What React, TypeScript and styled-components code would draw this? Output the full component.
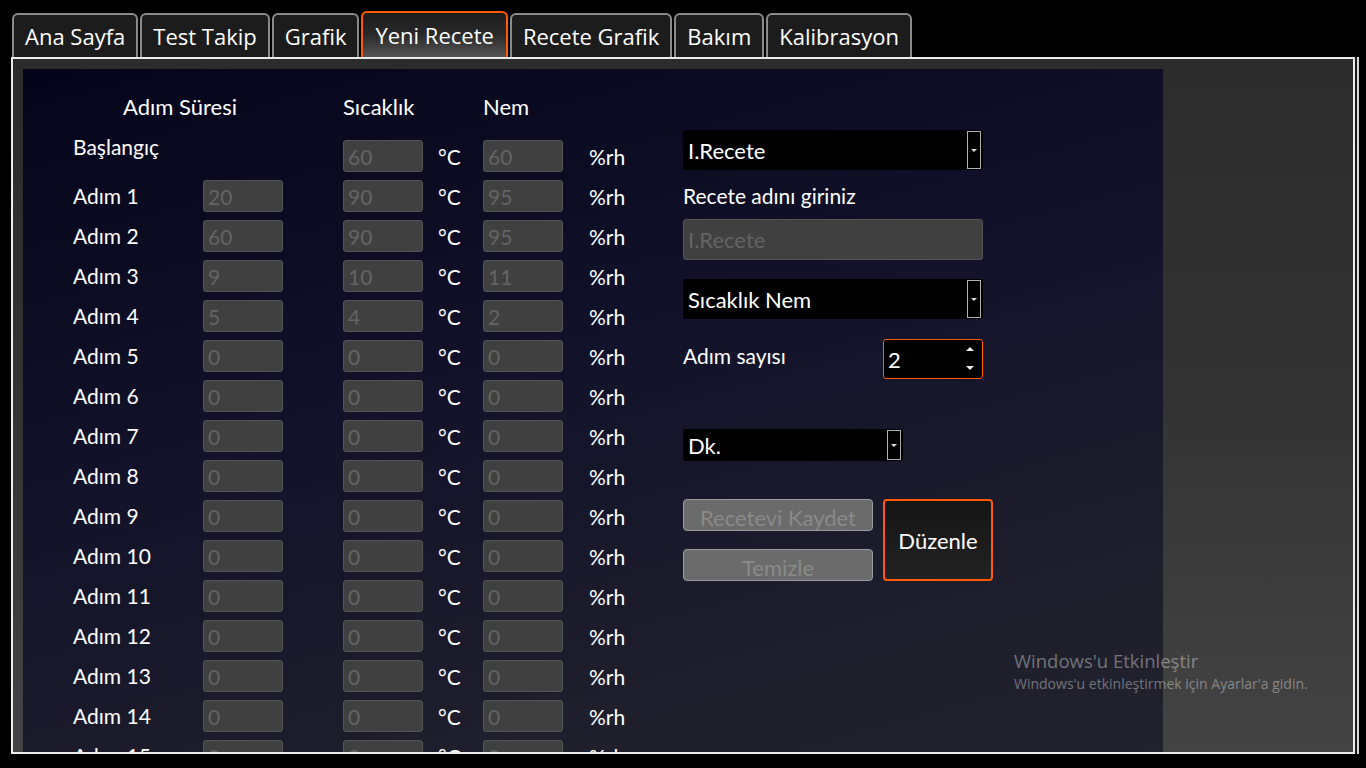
import styled, { createGlobalStyle } from "styled-components";

const GlobalStyle = createGlobalStyle`
  html, body {
    margin: 0;
    padding: 0;
    background: #000;
  }
  * {
    box-sizing: border-box;
  }
`;

const ORANGE = "#ff5a0a";
const LABEL_FONT = `Lato, "Open Sans", sans-serif`;
const TAB_FONT = `"Open Sans", "Noto Sans", sans-serif`;

const Screen = styled.div`
  position: relative;
  width: 1366px;
  height: 768px;
  overflow: hidden;
  background: #000;
`;

const TabBar = styled.div`
  display: flex;
  align-items: flex-end;
  gap: 2px;
  height: 46px;
  margin-top: 11px;
  padding-left: 12px;
`;

const Tab = styled.div<{ active?: boolean }>`
  height: ${(p) => (p.active ? 46 : 44)}px;
  padding: 0 ${(p) => (p.active ? 12 : 11)}px;
  display: flex;
  align-items: center;
  border: 2px solid ${(p) => (p.active ? ORANGE : "#8a8a8a")};
  border-bottom: none;
  border-radius: 6px 6px 0 0;
  background: ${(p) =>
    p.active
      ? "linear-gradient(to bottom, #1c1c1c 0%, #2a2a2a 50%, #555 100%)"
      : "#1c1c1c"};
  color: #fff;
  font-family: ${TAB_FONT};
  font-size: 22px;
  white-space: nowrap;
`;

const Frame = styled.div`
  width: 1344px;
  height: 697px;
  margin-left: 11px;
  padding: 10px 0 0 10px;
  border: 2px solid #ececec;
  box-shadow: 2px 0 0 #1a1a1a, 4px 0 0 #d8d8d8;
  overflow: hidden;
  background: linear-gradient(to bottom, #2c2c2c 0%, #333 50%, #444 100%);
`;

const Panel = styled.div`
  display: flex;
  align-items: flex-start;
  width: 1140px;
  min-height: 960px;
  padding: 24px 0 0 50px;
  background: linear-gradient(165deg, #04041a 0%, #12122a 35%, #1f1f2c 65%, #282830 100%);
  color: #fff;
  font-family: ${LABEL_FONT};
  font-size: 21px;
`;

const StepTable = styled.div`
  width: 610px;
  flex-shrink: 0;
`;

const columns = "130px 80px 60px 80px 60px 80px 120px";

const HeadRow = styled.div`
  display: grid;
  grid-template-columns: ${columns};
  height: 26px;
  margin-bottom: 17px;
  align-items: center;
  font-size: 22px;
`;

const HeadCell = styled.div<{ col: string; indent?: number }>`
  grid-column: ${(p) => p.col};
  padding-left: ${(p) => p.indent ?? 0}px;
  white-space: nowrap;
`;

const StepRow = styled.div`
  display: grid;
  grid-template-columns: ${columns};
  height: 40px;
  align-items: center;
`;

const StepLabel = styled.div<{ top?: boolean }>`
  align-self: ${(p) => (p.top ? "start" : "center")};
  line-height: 22px;
  white-space: nowrap;
`;

const Field = styled.input`
  width: 80px;
  height: 32px;
  padding: 0 4px;
  border: 1px solid #555;
  border-radius: 3px;
  background: #404040;
  color: #646464;
  font-family: ${LABEL_FONT};
  font-size: 21px;
  outline: none;
`;

const Unit = styled.div<{ indent: number }>`
  padding-left: ${(p) => p.indent}px;
  white-space: nowrap;
`;

const SideForm = styled.div`
  width: 310px;
  padding-top: 37px;
  display: flex;
  flex-direction: column;
  align-items: flex-start;
`;

const Select = styled.div<{ w: number; h: number; gapTop?: number }>`
  position: relative;
  width: ${(p) => p.w}px;
  height: ${(p) => p.h}px;
  margin-top: ${(p) => p.gapTop ?? 0}px;
  padding-left: 5px;
  display: flex;
  align-items: center;
  background: #000;
  border-radius: 3px;
  font-size: 22px;
`;

const SelectButton = styled.div`
  position: absolute;
  right: 2px;
  top: 1px;
  bottom: 1px;
  width: 14px;
  border: 1px solid #b0b0b0;
  background: #000;
  display: flex;
  align-items: center;
  justify-content: center;
  &::after {
    content: "";
    border-left: 3px solid transparent;
    border-right: 3px solid transparent;
    border-top: 3px solid #ddd;
  }
`;

const FormLabel = styled.div<{ gapTop?: number; padTop?: number }>`
  margin-top: ${(p) => p.gapTop ?? 0}px;
  padding-top: ${(p) => p.padTop ?? 0}px;
  line-height: 24px;
  white-space: nowrap;
`;

const NameField = styled.input`
  width: 300px;
  height: 41px;
  margin-top: 11px;
  padding: 0 4px;
  border: 1px solid #555;
  border-radius: 3px;
  background: #404040;
  color: #646464;
  font-family: ${LABEL_FONT};
  font-size: 22px;
  outline: none;
  &::placeholder {
    color: #646464;
  }
`;

const SpinRow = styled.div`
  display: flex;
  align-items: flex-start;
  width: 300px;
  height: 40px;
  margin-top: 20px;
  justify-content: space-between;
`;

const Spinner = styled.div`
  position: relative;
  width: 100px;
  height: 40px;
  padding-left: 4px;
  display: flex;
  align-items: center;
  border: 1px solid ${ORANGE};
  border-radius: 3px;
  background: #000;
  font-size: 22px;
`;

const SpinArrows = styled.div`
  position: absolute;
  right: 8px;
  top: 7px;
  bottom: 8px;
  display: flex;
  flex-direction: column;
  justify-content: space-between;
  align-items: center;
`;

const Arrow = styled.span<{ up?: boolean }>`
  width: 0;
  height: 0;
  border-left: 4px solid transparent;
  border-right: 4px solid transparent;
  ${(p) => (p.up ? "border-bottom: 4px solid #eee;" : "border-top: 4px solid #eee;")}
`;

const ButtonGrid = styled.div`
  display: grid;
  grid-template-columns: 190px 110px;
  grid-template-rows: 32px 32px;
  column-gap: 10px;
  row-gap: 18px;
  margin-top: 38px;
`;

const GhostButton = styled.div`
  display: flex;
  align-items: center;
  justify-content: center;
  overflow: hidden;
  border: 1px solid #9c9c9c;
  border-radius: 4px;
  background: #6b6b6b;
  color: #8a8a8a;
  font-size: 22px;
  white-space: nowrap;
  padding-top: 4px;
`;

const EditButton = styled.div`
  grid-column: 2;
  grid-row: 1 / span 2;
  display: flex;
  align-items: center;
  justify-content: center;
  border: 2px solid ${ORANGE};
  border-radius: 4px;
  background: linear-gradient(to bottom, #151515, #222);
  font-size: 22px;
`;

const Watermark = styled.div`
  position: absolute;
  left: 1014px;
  top: 649px;
  font-family: ${TAB_FONT};
  color: rgba(255, 255, 255, 0.38);
  pointer-events: none;
`;

const WatermarkTitle = styled.div`
  font-size: 18.5px;
  line-height: 24px;
`;

const WatermarkText = styled.div`
  font-size: 14px;
  line-height: 21px;
`;

const tabs = ["Ana Sayfa", "Test Takip", "Grafik", "Yeni Recete", "Recete Grafik", "Bakım", "Kalibrasyon"];

const steps: [string, string, string][] = [
  ["20", "90", "95"],
  ["60", "90", "95"],
  ["9", "10", "11"],
  ["5", "4", "2"],
  ...Array.from({ length: 16 }, () => ["0", "0", "0"] as [string, string, string]),
];

export default function App() {
  return (
    <Screen>
      <GlobalStyle />
      <TabBar>
        {tabs.map((t) => (
          <Tab key={t} active={t === "Yeni Recete"}>
            {t}
          </Tab>
        ))}
      </TabBar>
      <Frame>
        <Panel>
          <StepTable>
            <HeadRow>
              <HeadCell col="1 / span 2" indent={50}>Adım Süresi</HeadCell>
              <HeadCell col="4">Sıcaklık</HeadCell>
              <HeadCell col="6">Nem</HeadCell>
            </HeadRow>
            <StepRow>
              <StepLabel top>Başlangıç</StepLabel>
              <span />
              <span />
              <Field readOnly value="60" />
              <Unit indent={15}>°C</Unit>
              <Field readOnly value="60" />
              <Unit indent={26}>%rh</Unit>
            </StepRow>
            {steps.map((s, i) => (
              <StepRow key={i}>
                <StepLabel>Adım {i + 1}</StepLabel>
                <Field readOnly value={s[0]} />
                <span />
                <Field readOnly value={s[1]} />
                <Unit indent={15}>°C</Unit>
                <Field readOnly value={s[2]} />
                <Unit indent={26}>%rh</Unit>
              </StepRow>
            ))}
          </StepTable>
          <SideForm>
            <Select w={300} h={40}>
              I.Recete
              <SelectButton />
            </Select>
            <FormLabel gapTop={14}>Recete adını giriniz</FormLabel>
            <NameField readOnly placeholder="I.Recete" />
            <Select w={300} h={40} gapTop={19}>
              Sıcaklık Nem
              <SelectButton />
            </Select>
            <SpinRow>
              <FormLabel padTop={5}>Adım sayısı</FormLabel>
              <Spinner>
                2
                <SpinArrows>
                  <Arrow up />
                  <Arrow />
                </SpinArrows>
              </Spinner>
            </SpinRow>
            <Select w={220} h={32} gapTop={50}>
              Dk.
              <SelectButton />
            </Select>
            <ButtonGrid>
              <GhostButton>Recetevi Kaydet</GhostButton>
              <EditButton>Düzenle</EditButton>
              <GhostButton>Temizle</GhostButton>
            </ButtonGrid>
          </SideForm>
        </Panel>
      </Frame>
      <Watermark>
        <WatermarkTitle>Windows'u Etkinleştir</WatermarkTitle>
        <WatermarkText>Windows'u etkinleştirmek için Ayarlar'a gidin.</WatermarkText>
      </Watermark>
    </Screen>
  );
}
